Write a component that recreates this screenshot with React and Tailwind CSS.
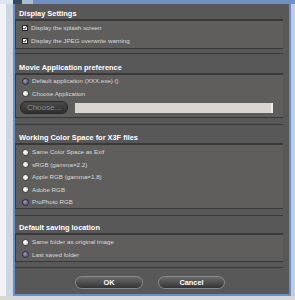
import React from "react";

const font = { fontFamily: '"Liberation Sans", Arial, sans-serif' };

function Check() {
  return (
    <span className="w-[6px] h-[6px] bg-white border border-[#222] flex items-center justify-center shrink-0">
      <svg width="6" height="6" viewBox="0 0 6 6">
        <path d="M0.8 3 L2.4 4.8 L5.4 0.6" stroke="#000" strokeWidth="1.3" fill="none" />
      </svg>
    </span>
  );
}

function Radio({ on }) {
  return on ? (
    <span className="w-[7px] h-[7px] rounded-full shrink-0 border border-[#2c2c3c] bg-[radial-gradient(circle_at_35%_35%,#9a98c8,#4a4878)]" />
  ) : (
    <span className="w-[7px] h-[7px] rounded-full shrink-0 border border-[#444] bg-[radial-gradient(circle_at_35%_35%,#ffffff,#d8d8d8)]" />
  );
}

function Row({ children, text }) {
  return (
    <div className="h-[12.5px] flex items-center gap-[3px] pl-[6px] text-[6.2px] text-[#dadada] leading-none">
      {children}
      <span>{text}</span>
    </div>
  );
}

function Title({ text, h }) {
  return (
    <div className={`${h} flex items-end pl-[4px] pb-[2px] text-[7.4px] font-bold text-white leading-none`}>
      {text}
    </div>
  );
}

function Box({ children, cls }) {
  return (
    <div className={`border-t-2 border-b border-l border-[#3a3939] bg-[#5f5e5d] ${cls}`}>{children}</div>
  );
}

export default function App() {
  return (
    <div style={font} className="w-[295px] h-[300px] bg-[#b8c8da] overflow-hidden flex flex-col">
      <div className="h-[4px] shrink-0 bg-[#6f90c2] flex">
        <div className="w-[13px] bg-[#dde6ef]" />
        <div className="w-[9px] bg-[#33475e]" />
        <div className="w-[11px] bg-[#a9bdd6]" />
      </div>
      <div className="flex h-[292px] shrink-0">
        <div className="w-[13px] bg-[linear-gradient(to_right,#f2f2f2_0,#f2f2f2_6px,#c9d6e4_6px)] shrink-0" />
        <div className="w-[278px] shrink-0 border-l-2 border-r-2 border-b-2 border-[#6b8fc4] bg-[#595858] flex flex-col pr-[6px]">
          <Title text="Display Settings" h="h-[15px]" />
          <Box cls="h-[30px] pt-[1px]">
            <Row text="Display the splash screen"><Check /></Row>
            <Row text="Display the JPEG overwrite warning"><Check /></Row>
          </Box>
          <div className="h-[5px] border-b border-[#3a3939]" />

          <Title text="Movie Application preference" h="h-[19px]" />
          <Box cls="h-[45px]">
            <Row text="Default application (XXX.exe) ()"><Radio on /></Row>
            <Row text="Choose Application"><Radio /></Row>
            <div className="flex items-center gap-[7px] pl-[4px] mt-[1px]">
              <div className="w-[48px] h-[13px] rounded-[6px] border border-[#2a2a2a] bg-[linear-gradient(#4a4a4a,#303030)] flex items-center justify-center text-[8px] text-[#8c8c8c] leading-none">
                Choose...
              </div>
              <div className="w-[198px] h-[10px] bg-[#dad6cf] border-r-2 border-[#f0eeea]" />
            </div>
          </Box>
          <div className="h-[7px] border-b border-[#3a3939]" />

          <Title text="Working Color Space for X3F files" h="h-[18px]" />
          <Box cls="h-[66px] pt-[1px]">
            <Row text="Same Color Space as Exif"><Radio /></Row>
            <Row text="sRGB (gamma=2.2)"><Radio /></Row>
            <Row text="Apple RGB (gamma=1.8)"><Radio /></Row>
            <Row text="Adobe RGB"><Radio /></Row>
            <Row text="ProPhoto RGB"><Radio on /></Row>
          </Box>
          <div className="h-[7px] border-b border-[#3a3939]" />

          <Title text="Default saving location" h="h-[17px]" />
          <Box cls="h-[29px] pt-[1px]">
            <Row text="Same folder as original image"><Radio /></Row>
            <Row text="Last saved folder"><Radio on /></Row>
          </Box>
          <div className="h-[6px] border-b border-[#3a3939]" />

          <div className="flex-1 flex items-start pt-[8px] pl-[60px] gap-[15px]">
            <div className="w-[68px] h-[13px] rounded-full border border-[#8a8a8a] bg-[linear-gradient(#6a6a6a,#343434)] flex items-center justify-center text-[7.4px] font-bold text-white leading-none">
              OK
            </div>
            <div className="w-[67px] h-[13px] rounded-full border border-[#8a8a8a] bg-[linear-gradient(#6a6a6a,#343434)] flex items-center justify-center text-[7.4px] font-bold text-white leading-none">
              Cancel
            </div>
          </div>
        </div>
        <div className="flex-1 bg-[#c0cfe0]" />
      </div>
      <div className="flex-1 bg-[#d8d8d8]" />
    </div>
  );
}
